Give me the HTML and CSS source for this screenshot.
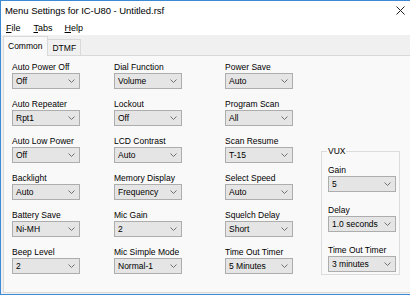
FILE: index.html
```html
<!DOCTYPE html>
<html>
<head>
    <title>Menu Settings for IC-U80 - Untitled.rsf</title>
    <link rel="stylesheet" href="styles.css">
</head>
<body>
    <div class="window">
        <div class="titlebar">
            <span class="title">Menu Settings for IC-U80 - Untitled.rsf</span>
            <svg class="close" width="9" height="9" viewBox="0 0 9 9">
                <path d="M0.5 0.5L8.5 8.5M8.5 0.5L0.5 8.5" stroke="#222" stroke-width="1"/>
            </svg>
        </div>
        <div class="menubar">
            <span class="menu-item"><u>F</u>ile</span>
            <span class="menu-item"><u>T</u>abs</span>
            <span class="menu-item"><u>H</u>elp</span>
        </div>
        <div class="client">
            <div class="tabs">
                <div class="tab active">Common</div>
                <div class="tab">DTMF</div>
            </div>
            <div class="page">
                <div class="col col-1">
                    <div class="field"><label>Auto Power Off</label><div class="combo"><span>Off</span><svg width="7" height="4" viewBox="0 0 7 4"><polyline points="0.5,0.5 3.5,3.5 6.5,0.5" fill="none" stroke="#707070"/></svg></div></div>
                    <div class="field"><label>Auto Repeater</label><div class="combo"><span>Rpt1</span><svg width="7" height="4" viewBox="0 0 7 4"><polyline points="0.5,0.5 3.5,3.5 6.5,0.5" fill="none" stroke="#707070"/></svg></div></div>
                    <div class="field"><label>Auto Low Power</label><div class="combo"><span>Off</span><svg width="7" height="4" viewBox="0 0 7 4"><polyline points="0.5,0.5 3.5,3.5 6.5,0.5" fill="none" stroke="#707070"/></svg></div></div>
                    <div class="field"><label>Backlight</label><div class="combo"><span>Auto</span><svg width="7" height="4" viewBox="0 0 7 4"><polyline points="0.5,0.5 3.5,3.5 6.5,0.5" fill="none" stroke="#707070"/></svg></div></div>
                    <div class="field"><label>Battery Save</label><div class="combo"><span>Ni-MH</span><svg width="7" height="4" viewBox="0 0 7 4"><polyline points="0.5,0.5 3.5,3.5 6.5,0.5" fill="none" stroke="#707070"/></svg></div></div>
                    <div class="field"><label>Beep Level</label><div class="combo"><span>2</span><svg width="7" height="4" viewBox="0 0 7 4"><polyline points="0.5,0.5 3.5,3.5 6.5,0.5" fill="none" stroke="#707070"/></svg></div></div>
                </div>
                <div class="col col-2">
                    <div class="field"><label>Dial Function</label><div class="combo"><span>Volume</span><svg width="7" height="4" viewBox="0 0 7 4"><polyline points="0.5,0.5 3.5,3.5 6.5,0.5" fill="none" stroke="#707070"/></svg></div></div>
                    <div class="field"><label>Lockout</label><div class="combo"><span>Off</span><svg width="7" height="4" viewBox="0 0 7 4"><polyline points="0.5,0.5 3.5,3.5 6.5,0.5" fill="none" stroke="#707070"/></svg></div></div>
                    <div class="field"><label>LCD Contrast</label><div class="combo"><span>Auto</span><svg width="7" height="4" viewBox="0 0 7 4"><polyline points="0.5,0.5 3.5,3.5 6.5,0.5" fill="none" stroke="#707070"/></svg></div></div>
                    <div class="field"><label>Memory Display</label><div class="combo"><span>Frequency</span><svg width="7" height="4" viewBox="0 0 7 4"><polyline points="0.5,0.5 3.5,3.5 6.5,0.5" fill="none" stroke="#707070"/></svg></div></div>
                    <div class="field"><label>Mic Gain</label><div class="combo"><span>2</span><svg width="7" height="4" viewBox="0 0 7 4"><polyline points="0.5,0.5 3.5,3.5 6.5,0.5" fill="none" stroke="#707070"/></svg></div></div>
                    <div class="field"><label>Mic Simple Mode</label><div class="combo"><span>Normal-1</span><svg width="7" height="4" viewBox="0 0 7 4"><polyline points="0.5,0.5 3.5,3.5 6.5,0.5" fill="none" stroke="#707070"/></svg></div></div>
                </div>
                <div class="col col-3">
                    <div class="field"><label>Power Save</label><div class="combo"><span>Auto</span><svg width="7" height="4" viewBox="0 0 7 4"><polyline points="0.5,0.5 3.5,3.5 6.5,0.5" fill="none" stroke="#707070"/></svg></div></div>
                    <div class="field"><label>Program Scan</label><div class="combo"><span>All</span><svg width="7" height="4" viewBox="0 0 7 4"><polyline points="0.5,0.5 3.5,3.5 6.5,0.5" fill="none" stroke="#707070"/></svg></div></div>
                    <div class="field"><label>Scan Resume</label><div class="combo"><span>T-15</span><svg width="7" height="4" viewBox="0 0 7 4"><polyline points="0.5,0.5 3.5,3.5 6.5,0.5" fill="none" stroke="#707070"/></svg></div></div>
                    <div class="field"><label>Select Speed</label><div class="combo"><span>Auto</span><svg width="7" height="4" viewBox="0 0 7 4"><polyline points="0.5,0.5 3.5,3.5 6.5,0.5" fill="none" stroke="#707070"/></svg></div></div>
                    <div class="field"><label>Squelch Delay</label><div class="combo"><span>Short</span><svg width="7" height="4" viewBox="0 0 7 4"><polyline points="0.5,0.5 3.5,3.5 6.5,0.5" fill="none" stroke="#707070"/></svg></div></div>
                    <div class="field"><label>Time Out Timer</label><div class="combo"><span>5 Minutes</span><svg width="7" height="4" viewBox="0 0 7 4"><polyline points="0.5,0.5 3.5,3.5 6.5,0.5" fill="none" stroke="#707070"/></svg></div></div>
                </div>
                <fieldset class="group">
                    <legend>VUX</legend>
                    <div class="field"><label>Gain</label><div class="combo"><span>5</span><svg width="7" height="4" viewBox="0 0 7 4"><polyline points="0.5,0.5 3.5,3.5 6.5,0.5" fill="none" stroke="#707070"/></svg></div></div>
                    <div class="field"><label>Delay</label><div class="combo"><span>1.0 seconds</span><svg width="7" height="4" viewBox="0 0 7 4"><polyline points="0.5,0.5 3.5,3.5 6.5,0.5" fill="none" stroke="#707070"/></svg></div></div>
                    <div class="field"><label>Time Out Timer</label><div class="combo"><span>3 minutes</span><svg width="7" height="4" viewBox="0 0 7 4"><polyline points="0.5,0.5 3.5,3.5 6.5,0.5" fill="none" stroke="#707070"/></svg></div></div>
                </fieldset>
            </div>
        </div>
    </div>
</body>
</html>
```

FILE: styles.css
```css
body {
    margin: 0;
    padding: 0;
    background-color: #fff;
    font-family: 'Liberation Sans', Arial, sans-serif;
    color: #000;
    overflow: hidden;
    width: 410px;
    height: 297px;
}
.window {
    width: 430px;
    height: 295px;
    box-sizing: border-box;
    border: 1px solid #3d8ad6;
    border-right: none;
    display: flex;
    flex-direction: column;
    background-color: #fff;
}
.titlebar {
    height: 19px;
    display: flex;
    align-items: center;
    padding-left: 4px;
    position: relative;
}
.title {
    font-size: 9.5px;
    letter-spacing: -0.05px;
}
.close {
    position: absolute;
    left: 395px;
    top: 5px;
}
.menubar {
    height: 15px;
    display: flex;
    align-items: center;
    padding-left: 5px;
    font-size: 9px;
}
.menu-item {
    margin-right: 13px;
}
.menu-item:nth-child(2) {
    margin-right: 12px;
}
.client {
    flex: 1;
    background-color: #f0f0f0;
    padding-left: 2px;
    display: flex;
    flex-direction: column;
}
.tabs {
    height: 20px;
    display: flex;
    align-items: flex-end;
    font-size: 8.5px;
    position: relative;
    z-index: 1;
}
.tab {
    height: 16px;
    box-sizing: border-box;
    padding: 3px 4px 0 4px;
    border: 1px solid #d9d9d9;
    border-bottom: none;
    background-color: #f0f0f0;
    margin-left: -1px;
}
.tab.active {
    height: 20px;
    margin-left: 0;
    margin-bottom: -1px;
    padding: 4px 5px 0 4px;
    background-color: #f9f9f9;
}
.page {
    height: 238px;
    box-sizing: border-box;
    border: 1px solid #d9d9d9;
    border-right: none;
    background-color: #f9f9f9;
    display: flex;
    align-items: flex-start;
    padding: 6px 0 0 8px;
}
.col {
    width: 68px;
    display: flex;
    flex-direction: column;
    gap: 10px;
}
.col-1 {
    margin-right: 34px;
}
.col-2 {
    margin-right: 43px;
}
.col-3 {
    margin-right: 28px;
}
.field label {
    display: block;
    font-size: 8.5px;
    line-height: 11px;
    height: 11px;
    white-space: nowrap;
}
.combo {
    height: 16px;
    box-sizing: border-box;
    border: 1px solid #adadad;
    background-color: #e5e5e5;
    display: flex;
    align-items: center;
    justify-content: space-between;
    padding: 0 4px 0 3px;
    font-size: 8.5px;
    white-space: nowrap;
}
.group {
    margin: 84px 0 0 0;
    width: 79px;
    box-sizing: border-box;
    border: 1px solid #dcdcdc;
    padding: 8px 3px 2px 6px;
    display: flex;
    flex-direction: column;
    gap: 13px;
}
.group legend {
    font-size: 8.5px;
    line-height: 11px;
    padding: 0 1px;
    margin-left: -1px;
}
```
